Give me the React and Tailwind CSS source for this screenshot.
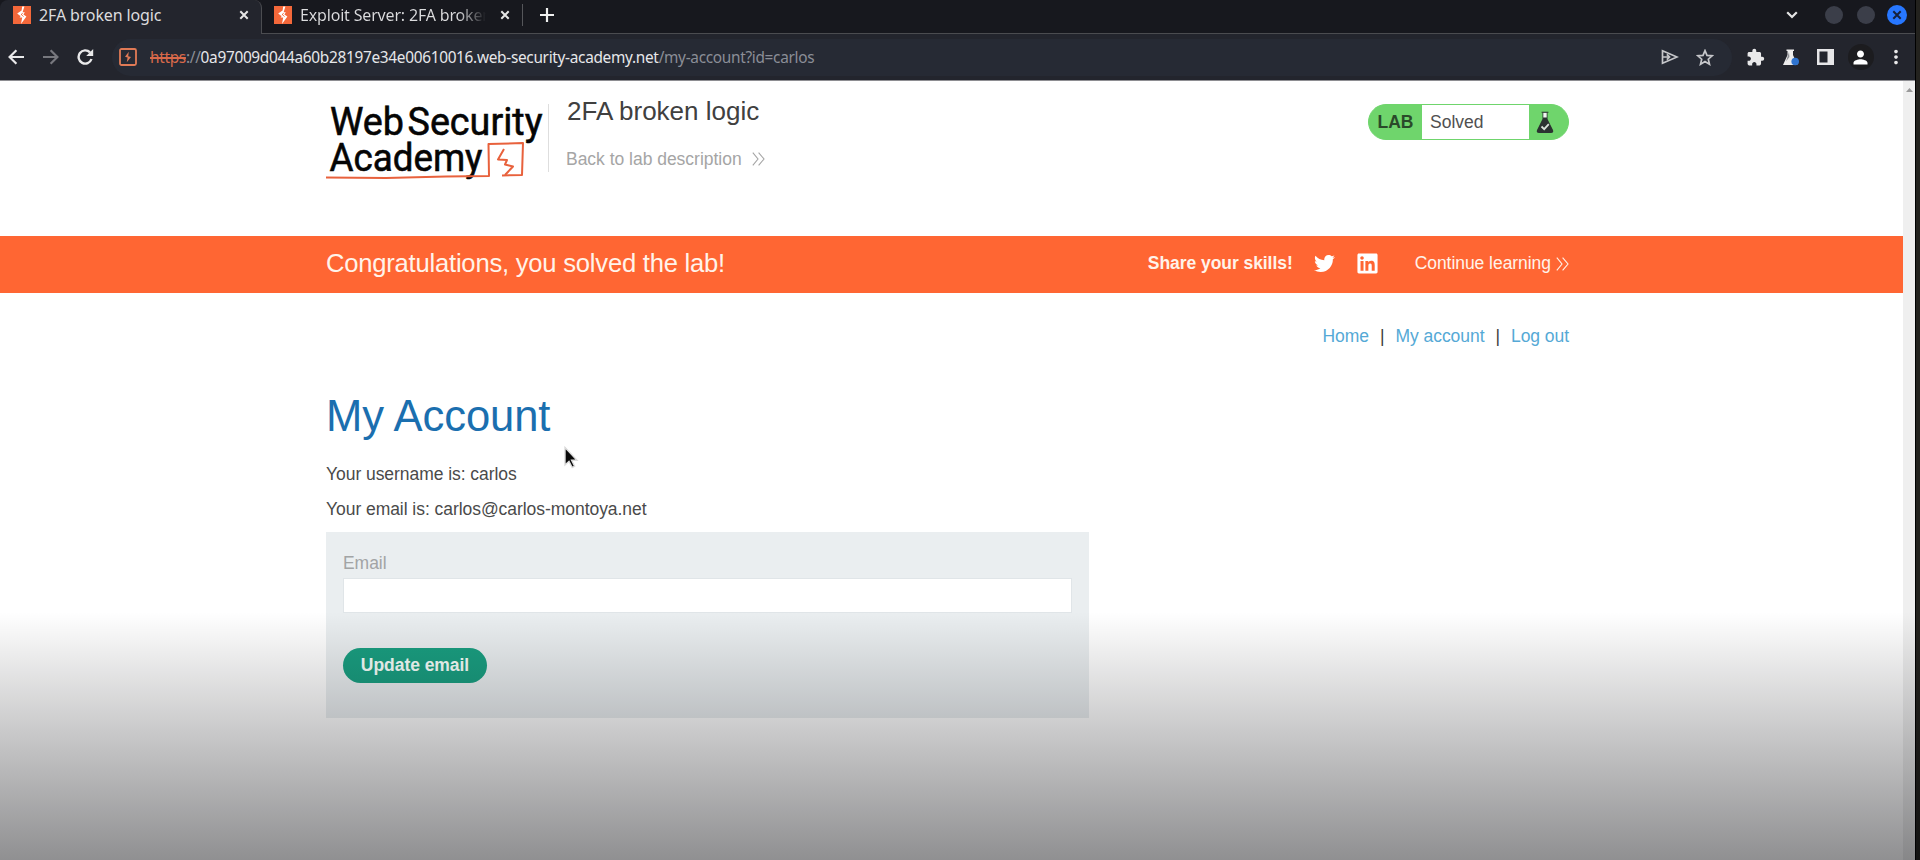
import React from "react";
import { MdExtension, MdPerson, MdMoreVert } from "react-icons/md";
import { FaTwitter, FaLinkedin } from "react-icons/fa";

function BurpFavicon() {
  return (
    <svg width="18" height="18" viewBox="0 0 18 18" className="shrink-0">
      <rect width="18" height="18" fill="#f4683a" />
      <path d="M9.2 0.5 8.6 4.6 4.2 7.6 7.6 10.2 6.6 11.6 9.2 11.6 8 18 13.4 10.6 10.4 8.4 11.8 6.2 9.6 6.2 11.4 0.5Z" fill="#fff" />
      <path d="M9.6 7 8 9.2M8.2 8.4 10.6 10.6" stroke="#f4683a" strokeWidth="0.9" />
    </svg>
  );
}

function SiteIcon() {
  return (
    <svg width="18" height="18" viewBox="0 0 18 18" className="shrink-0" fill="none">
      <rect x="1" y="1" width="16" height="16" rx="1.5" stroke="#e07a56" strokeWidth="1.8" />
      <path d="M9.8 3.8 6 8.8 8.6 9.4 7.8 14.2 12 9.1 9.2 8.2Z" fill="#e07a56" />
    </svg>
  );
}

function Close({ className }) {
  return (
    <svg width="10" height="10" viewBox="0 0 10 10" className={className}>
      <path d="M1.3 1.3 8.7 8.7M8.7 1.3 1.3 8.7" stroke="currentColor" strokeWidth="2" />
    </svg>
  );
}

function Chevrons({ className }) {
  return (
    <svg width="13" height="14" viewBox="0 0 13 14" fill="none" stroke="currentColor" strokeWidth="1.1" className={className}>
      <path d="M0.8 0.6 6 7 0.8 13.4M6.6 0.6 12 7 6.6 13.4" />
    </svg>
  );
}

function Arrow({ className }) {
  return (
    <svg width="16" height="16" viewBox="0 0 16 16" fill="none" stroke="currentColor" strokeWidth="2.2" className={className}>
      <path d="M16 8H2M8.4 1.2 1.6 8 8.4 14.8" />
    </svg>
  );
}

function TabStrip() {
  return (
    <div className="flex h-[34px] items-start border-b border-[#4b4c50] bg-[#17181e] text-[16px] text-[#dcdcde]">
      <div className="-mb-px flex h-[34px] w-[262px] shrink-0 items-center rounded-t-lg border-r border-[#4b4c50] bg-[#23252d] pb-[4px] pl-[13px] pr-[12px]">
        <BurpFavicon />
        <span className="ml-[8px] whitespace-nowrap leading-[26px] tracking-[-0.13px]">2FA broken logic</span>
        <Close className="ml-auto text-[#e6e6e6]" />
      </div>
      <div className="flex h-[30px] w-[260px] shrink-0 items-center pl-[12px] pr-[12px]">
        <BurpFavicon />
        <span className="ml-[8px] w-[186px] overflow-hidden whitespace-nowrap bg-linear-to-r from-[#dcdcde] from-85% to-transparent bg-clip-text leading-[26px] tracking-[-0.17px] text-transparent">
          Exploit Server: 2FA broken logic
        </span>
        <Close className="ml-auto text-[#e6e6e6]" />
      </div>
      <div className="mt-[4px] h-[22px] w-px bg-[#55565a]" />
      <svg width="14" height="14" viewBox="0 0 14 14" className="ml-[17px] mt-[8px]">
        <path d="M7 0V14M0 7H14" stroke="#f0f0f0" strokeWidth="2.2" />
      </svg>
      <div className="ml-auto flex h-[30px] items-center pr-[8px]">
        <svg width="12" height="8" viewBox="0 0 12 8" className="mr-[27px]" fill="none">
          <path d="M1.2 1.2 6 6 10.8 1.2" stroke="#e4e4e4" strokeWidth="2.2" />
        </svg>
        <div className="mr-[14px] h-[18px] w-[18px] rounded-full bg-[#3b3e49]" />
        <div className="mr-[12px] h-[18px] w-[18px] rounded-full bg-[#3b3e49]" />
        <div className="flex h-[20px] w-[20px] items-center justify-center rounded-full bg-[#2777ff]">
          <Close className="text-[#15213c]" />
        </div>
      </div>
    </div>
  );
}

function Cell({ children }) {
  return <div className="flex w-[35px] shrink-0 items-center justify-center">{children}</div>;
}

function Toolbar() {
  return (
    <div className="flex h-[47px] items-center border-b border-[#8e8e92] bg-[#23252d] text-[#e9e9ea]">
      <div className="-ml-[2px] flex">
        <Cell><Arrow /></Cell>
        <Cell><Arrow className="rotate-180 text-[#77787e]" /></Cell>
        <Cell>
          <svg width="17" height="16" viewBox="0 0 17 16" fill="none">
            <path d="M14.5 10A6.6 6.6 0 1 1 13 3.4" stroke="currentColor" strokeWidth="2.4" />
            <path d="M16.2 0V7H9.2Z" fill="currentColor" />
          </svg>
        </Cell>
      </div>
      <div className="ml-[9px] flex h-[37px] w-[1620px] items-center rounded-full bg-[#262a34] pl-[7px]">
        <SiteIcon />
        <div className="ml-[13px] whitespace-nowrap pt-px text-[15.4px] tracking-[-0.31px] text-[#8b8e97]">
          <span className="text-[#d9694a] line-through decoration-2">https</span>
          <span>://</span>
          <span className="text-[#e6e7ea]">0a97009d044a60b28197e34e00610016.web-security-academy.net</span>
          <span>/my-account?id=carlos</span>
        </div>
        <div className="ml-auto flex pr-[10px] text-[#c6c7ca]">
          <Cell>
            <svg width="18" height="16" viewBox="0 0 18 16" fill="none" stroke="currentColor" strokeWidth="1.7">
              <path d="M1.5 1.8 16 8 1.5 14.2ZM1.5 8H8.5M5.8 5.4 8.5 8 5.8 10.6" />
            </svg>
          </Cell>
          <Cell>
            <svg width="18" height="17" viewBox="0 0 18 17" fill="none" stroke="currentColor" strokeWidth="1.7">
              <path d="M9 1.6 11 6.4 16.2 6.8 12.3 10.2 13.5 15.3 9 12.6 4.5 15.3 5.7 10.2 1.8 6.8 7 6.4Z" />
            </svg>
          </Cell>
        </div>
      </div>
      <div className="ml-[6px] flex">
        <Cell><MdExtension size={19} /></Cell>
        <Cell>
          <svg width="18" height="17" viewBox="0 0 18 17">
            <path d="M4.5 0.5H12V2H11V6L15.5 16H1L5.5 6V2H4.5Z" fill="#ececec" />
            <path d="M7 3 7.4 8 4 12.5Z" fill="#8d8f94" />
            <circle cx="13.2" cy="12.5" r="3.8" fill="#2f74d0" />
          </svg>
        </Cell>
        <Cell>
          <svg width="17" height="16" viewBox="0 0 17 16">
            <path d="M0 0H17V16H0Z" fill="#e6e6e8" />
            <path d="M2.5 2.5H10.5V13.5H2.5Z" fill="#23252d" />
          </svg>
        </Cell>
        <Cell>
          <div className="flex h-[26px] w-[26px] items-center justify-center rounded-full bg-[#1c1c1f] text-white"><MdPerson size={21} /></div>
        </Cell>
        <Cell><MdMoreVert size={22} /></Cell>
      </div>
    </div>
  );
}

function AcademyLogo() {
  return (
    <svg width="220" height="84" viewBox="0 0 220 84" className="shrink-0">
      <g fontFamily="Roboto, 'Noto Sans', sans-serif" fontSize="39.5" fontWeight="400" fill="#050505" stroke="#050505" strokeWidth="0.6">
        <text x="4" y="36" textLength="74" lengthAdjust="spacingAndGlyphs">Web</text>
        <text x="81.5" y="36" textLength="135" lengthAdjust="spacingAndGlyphs">Security</text>
        <text x="3.5" y="72" textLength="153" lengthAdjust="spacingAndGlyphs">Academy</text>
      </g>
      <g fill="none" stroke="#e8613c" strokeWidth="2" strokeLinejoin="round">
        <path d="M0 78.5 60 79 120 77.5 163 77 162.5 45 197 44 196 76 176 76.5" />
        <path d="M178 50 172 60.5 181 61 179 65.5 187 67.5 179 76" />
      </g>
    </svg>
  );
}

function LabHeader() {
  return (
    <header className="flex h-[155px] items-start pl-[326px]">
      <div className="mt-[18px]"><AcademyLogo /></div>
      <div className="ml-[2px] mt-[23px] h-[68px] w-px bg-[#dedede]" />
      <div className="ml-[17px] mt-[14px]">
        <h2 className="pl-px text-[26px] leading-[32px] text-[#404040]">2FA broken logic</h2>
        <a className="mt-[20px] flex items-center text-[17.5px] leading-[24px] tracking-[-0.02px] text-[#a5a5a5]">
          Back to lab description
          <Chevrons className="ml-[10px]" />
        </a>
      </div>
      <div className="ml-auto mr-[334px] mt-[23px] flex h-[36px] w-[201px] overflow-hidden rounded-full border border-[#6fd56c] bg-[#6fd56c]">
        <div className="flex w-[53px] items-center justify-center text-[17.5px] font-bold text-[#2a4a2a]">LAB</div>
        <div className="flex w-[107px] items-center bg-white pl-[8px] text-[17.5px] text-[#505050]">Solved</div>
        <div className="flex flex-1 items-center pl-[7px]">
          <svg width="18" height="23" viewBox="0 0 18 23">
            <path d="M6.5 1.5V8L1 19Q0 22 3 22H15Q18 22 17 19L11.5 8V1.5Z" fill="#2b3331" />
            <path d="M7.3 1.5H10.7V6.5H7.3Z" fill="#f2f7f2" />
            <path d="M5.6 1.2H12.4" stroke="#2b3331" strokeWidth="1.1" />
            <path d="M5.5 15.5 8.2 18.2 12.8 13.2" stroke="#d9e2da" strokeWidth="1.8" fill="none" />
          </svg>
        </div>
      </div>
    </header>
  );
}

function SolvedBanner() {
  return (
    <div className="flex h-[57px] items-center bg-[#ff6633] pb-[2px] pl-[326px] pr-[334px] text-[17.5px] text-[#fff3ea]">
      <h3 className="text-[25.6px] tracking-[-0.22px]">Congratulations, you solved the lab!</h3>
      <span className="ml-auto font-bold tracking-[-0.06px]">Share your skills!</span>
      <FaTwitter size={21} className="ml-[21px] text-white" />
      <FaLinkedin size={23} className="ml-[21px] text-white" />
      <span className="ml-[36px] tracking-[-0.05px]">Continue learning</span>
      <Chevrons className="ml-[5px]" />
    </div>
  );
}

function Account() {
  return (
    <main className="flex flex-1 flex-col pl-[326px] pr-[334px] text-[17.5px] tracking-[-0.05px] text-[#4a4a4a]">
      <nav className="mt-[31px] flex justify-end leading-[24px] text-[#55a9d6]">
        <a>Home</a>
        <span className="mx-[11px] text-[#404040]">|</span>
        <a>My account</a>
        <span className="mx-[11px] text-[#404040]">|</span>
        <a>Log out</a>
      </nav>
      <h1 className="mt-[42px] text-[43.6px] leading-[52px] tracking-[-0.1px] text-[#1b6faf]">My Account</h1>
      <p className="mt-[20px] leading-[24px]">Your username is: carlos</p>
      <p className="mt-[11px] leading-[24px]">Your email is: carlos@carlos-montoya.net</p>
      <form className="mt-[11px] flex h-[186px] w-[763px] flex-col items-start bg-[#eaeef0] px-[17px]">
        <label className="mt-[19px] leading-[24px] text-[#a2a4a5]">Email</label>
        <div className="mt-[3px] h-[35px] w-full border border-[#e0e5e8] bg-white" />
        <div className="mt-[35px] flex h-[35px] w-[144px] items-center justify-center rounded-full bg-[#1a9f81] font-bold text-[#f6fffb]">
          Update email
        </div>
      </form>
    </main>
  );
}

function Pointer() {
  return (
    <svg width="16" height="24" viewBox="0 0 16 24" className="absolute left-[563px] top-[446px]">
      <path d="M2 1.5V19L6 15.3 9.2 21.5 11.6 20.3 8.6 14.3H14Z" fill="#0a0a0a" stroke="#dcdcdc" strokeWidth="1.4" />
    </svg>
  );
}

export default function App() {
  return (
    <div className="relative flex h-[860px] w-[1920px] overflow-hidden bg-[#23221e]">
      <div className="flex w-[1915px] flex-col">
        <div className="font-['Noto_Sans',sans-serif]">
          <TabStrip />
          <Toolbar />
        </div>
        <div className="flex flex-1">
          <div className="flex w-[1903px] flex-col bg-white font-['Liberation_Sans',Arial,sans-serif]">
            <LabHeader />
            <SolvedBanner />
            <Account />
          </div>
          <div className="flex flex-1 justify-center bg-[#efefef] pt-[7px]">
            <svg width="7" height="4" viewBox="0 0 7 4"><path d="M0 4 3.5 0 7 4Z" fill="#9a9a9a" /></svg>
          </div>
        </div>
      </div>
      <div className="w-px bg-black" />
      <Pointer />
      <div className="absolute inset-x-0 bottom-0 h-[248px] bg-linear-to-b from-black/0 to-[#020206]/44" />
    </div>
  );
}
